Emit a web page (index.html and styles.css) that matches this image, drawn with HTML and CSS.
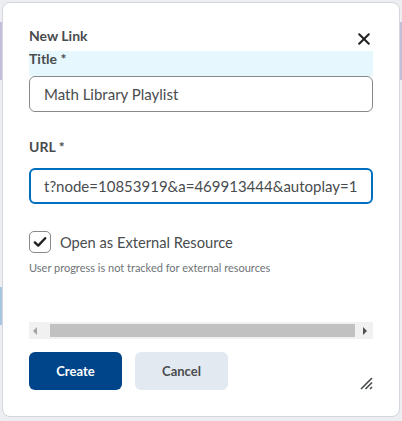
FILE: index.html
```html
<!DOCTYPE html>
<html lang="en">
<head>
<meta charset="utf-8">
<title>New Link</title>
<link rel="stylesheet" href="styles.css">
</head>
<body>
<div class="backdrop">
  <span class="strip strip-a"></span>
  <span class="strip strip-b"></span>
  <span class="strip strip-c"></span>
</div>
<div class="dialog" role="dialog" aria-label="New Link">
  <div class="header">
    <h1 class="title">New Link</h1>
    <button class="close" aria-label="Close">
      <svg width="12" height="12" viewBox="0 0 12 12"><path d="M1.2 1.2 L10.8 10.8 M10.8 1.2 L1.2 10.8" stroke="#202122" stroke-width="2" stroke-linecap="round"/></svg>
    </button>
  </div>
  <div class="body">
    <div class="label band">Title *</div>
    <div class="input">Math Library Playlist</div>
    <div class="label url-label">URL *</div>
    <div class="input focused">t?node=10853919&amp;a=469913444&amp;autoplay=1</div>
    <label class="check-row">
      <span class="checkbox">
        <svg width="14" height="12" viewBox="0 0 14 12"><path d="M1.8 6.4 L5.2 9.6 L12.2 2.2" fill="none" stroke="#202122" stroke-width="2.4" stroke-linecap="round" stroke-linejoin="round"/></svg>
      </span>
      <span class="check-label">Open as External Resource</span>
    </label>
    <div class="help">User progress is not tracked for external resources</div>
  </div>
  <div class="hscroll">
    <span class="arrow left"></span>
    <span class="thumb"></span>
    <span class="arrow right"></span>
  </div>
  <div class="footer">
    <button class="btn primary">Create</button>
    <button class="btn secondary">Cancel</button>
    <svg class="resize" width="13" height="13" viewBox="0 0 13 13"><path d="M1 12 L12 1 M5.5 12 L12 5.5 M10 12 L12 10" stroke="#494c4e" stroke-width="1.6"/></svg>
  </div>
</div>
</body>
</html>
```
FILE: styles.css
```css
* { box-sizing: border-box; }
html, body { margin: 0; padding: 0; }
body {
  width: 402px;
  height: 421px;
  background: #eceef1;
  font-family: Lato, "Noto Sans", sans-serif;
  color: #494c4e;
  position: relative;
  overflow: hidden;
  padding: 2px 2px 0 2px;
}
.backdrop { position: absolute; inset: 0; }
.strip { position: absolute; display: block; width: 2px; }
.strip-a { left: 0; top: 22px; height: 58px; background: #c4bfd8; }
.strip-b { left: 0; top: 287px; height: 38px; background: #a9c6e0; }
.strip-c { right: 0; top: 22px; height: 58px; background: #c4bfd8; }

.dialog {
  position: relative;
  width: 398px;
  height: 415px;
  background: #fff;
  border: 1px solid #d3d7dd;
  border-radius: 8px;
  padding: 0 26px;
  display: flex;
  flex-direction: column;
}
.header {
  height: 48px;
  display: flex;
  align-items: flex-start;
  justify-content: space-between;
}
.title {
  margin: 0;
  padding-top: 25px;
  font-size: 14px;
  line-height: 16px;
  font-weight: 700;
  color: #494c4e;
}
.close {
  margin-top: 30px;
  margin-right: 3px;
  width: 12px;
  height: 12px;
  padding: 0;
  border: 0;
  background: none;
  display: flex;
}
.body { display: flex; flex-direction: column; }
.label {
  font-size: 14px;
  font-weight: 700;
  line-height: 16px;
  color: #494c4e;
}
.band {
  background: #e6f7fe;
  height: 25px;
  padding-top: 0;
}
.input {
  height: 36px;
  border: 1px solid #868a8e;
  border-radius: 6px;
  font-size: 15px;
  line-height: 20px;
  padding: 7px 14px;
  color: #494c4e;
  white-space: nowrap;
  overflow: hidden;
}
.input.focused {
  border: 2px solid #006fbf;
  padding: 6px 13px;
}
.url-label { margin-top: 27px; margin-bottom: 13px; }
.check-row {
  margin-top: 27px;
  display: flex;
  align-items: center;
  gap: 9px;
}
.checkbox {
  width: 22px;
  height: 22px;
  border: 1px solid #868a8e;
  border-radius: 5px;
  display: flex;
  align-items: center;
  justify-content: center;
}
.check-label { font-size: 14.7px; line-height: 18px; color: #494c4e; }
.help {
  margin-top: 8px;
  font-size: 11px;
  line-height: 14px;
  color: #6e7376;
}
.hscroll {
  margin-top: auto;
  margin-bottom: 13px;
  height: 17px;
  background: #f1f1f1;
  display: flex;
  align-items: center;
  padding: 0 4px;
}
.thumb {
  display: block;
  margin-left: 13px;
  width: 305px;
  height: 13px;
  background: #c1c1c1;
}
.arrow { display: block; width: 0; height: 0; border-top: 4px solid transparent; border-bottom: 4px solid transparent; }
.arrow.left { border-right: 4px solid #a3a3a3; }
.arrow.right { margin-left: auto; margin-right: 2px; border-left: 4px solid #505050; }
.footer {
  display: flex;
  align-items: flex-start;
  gap: 13px;
  height: 64px;
  position: relative;
}
.btn {
  width: 93px;
  height: 38px;
  border: 0;
  border-radius: 6px;
  font-family: Lato, "Noto Sans", sans-serif;
  font-size: 13px;
  font-weight: 700;
  padding: 0;
}
.primary { background: #004489; color: #fff; }
.secondary { background: #e3e9f1; color: #494c4e; }
.resize { margin-left: auto; margin-top: 25px; }
```
